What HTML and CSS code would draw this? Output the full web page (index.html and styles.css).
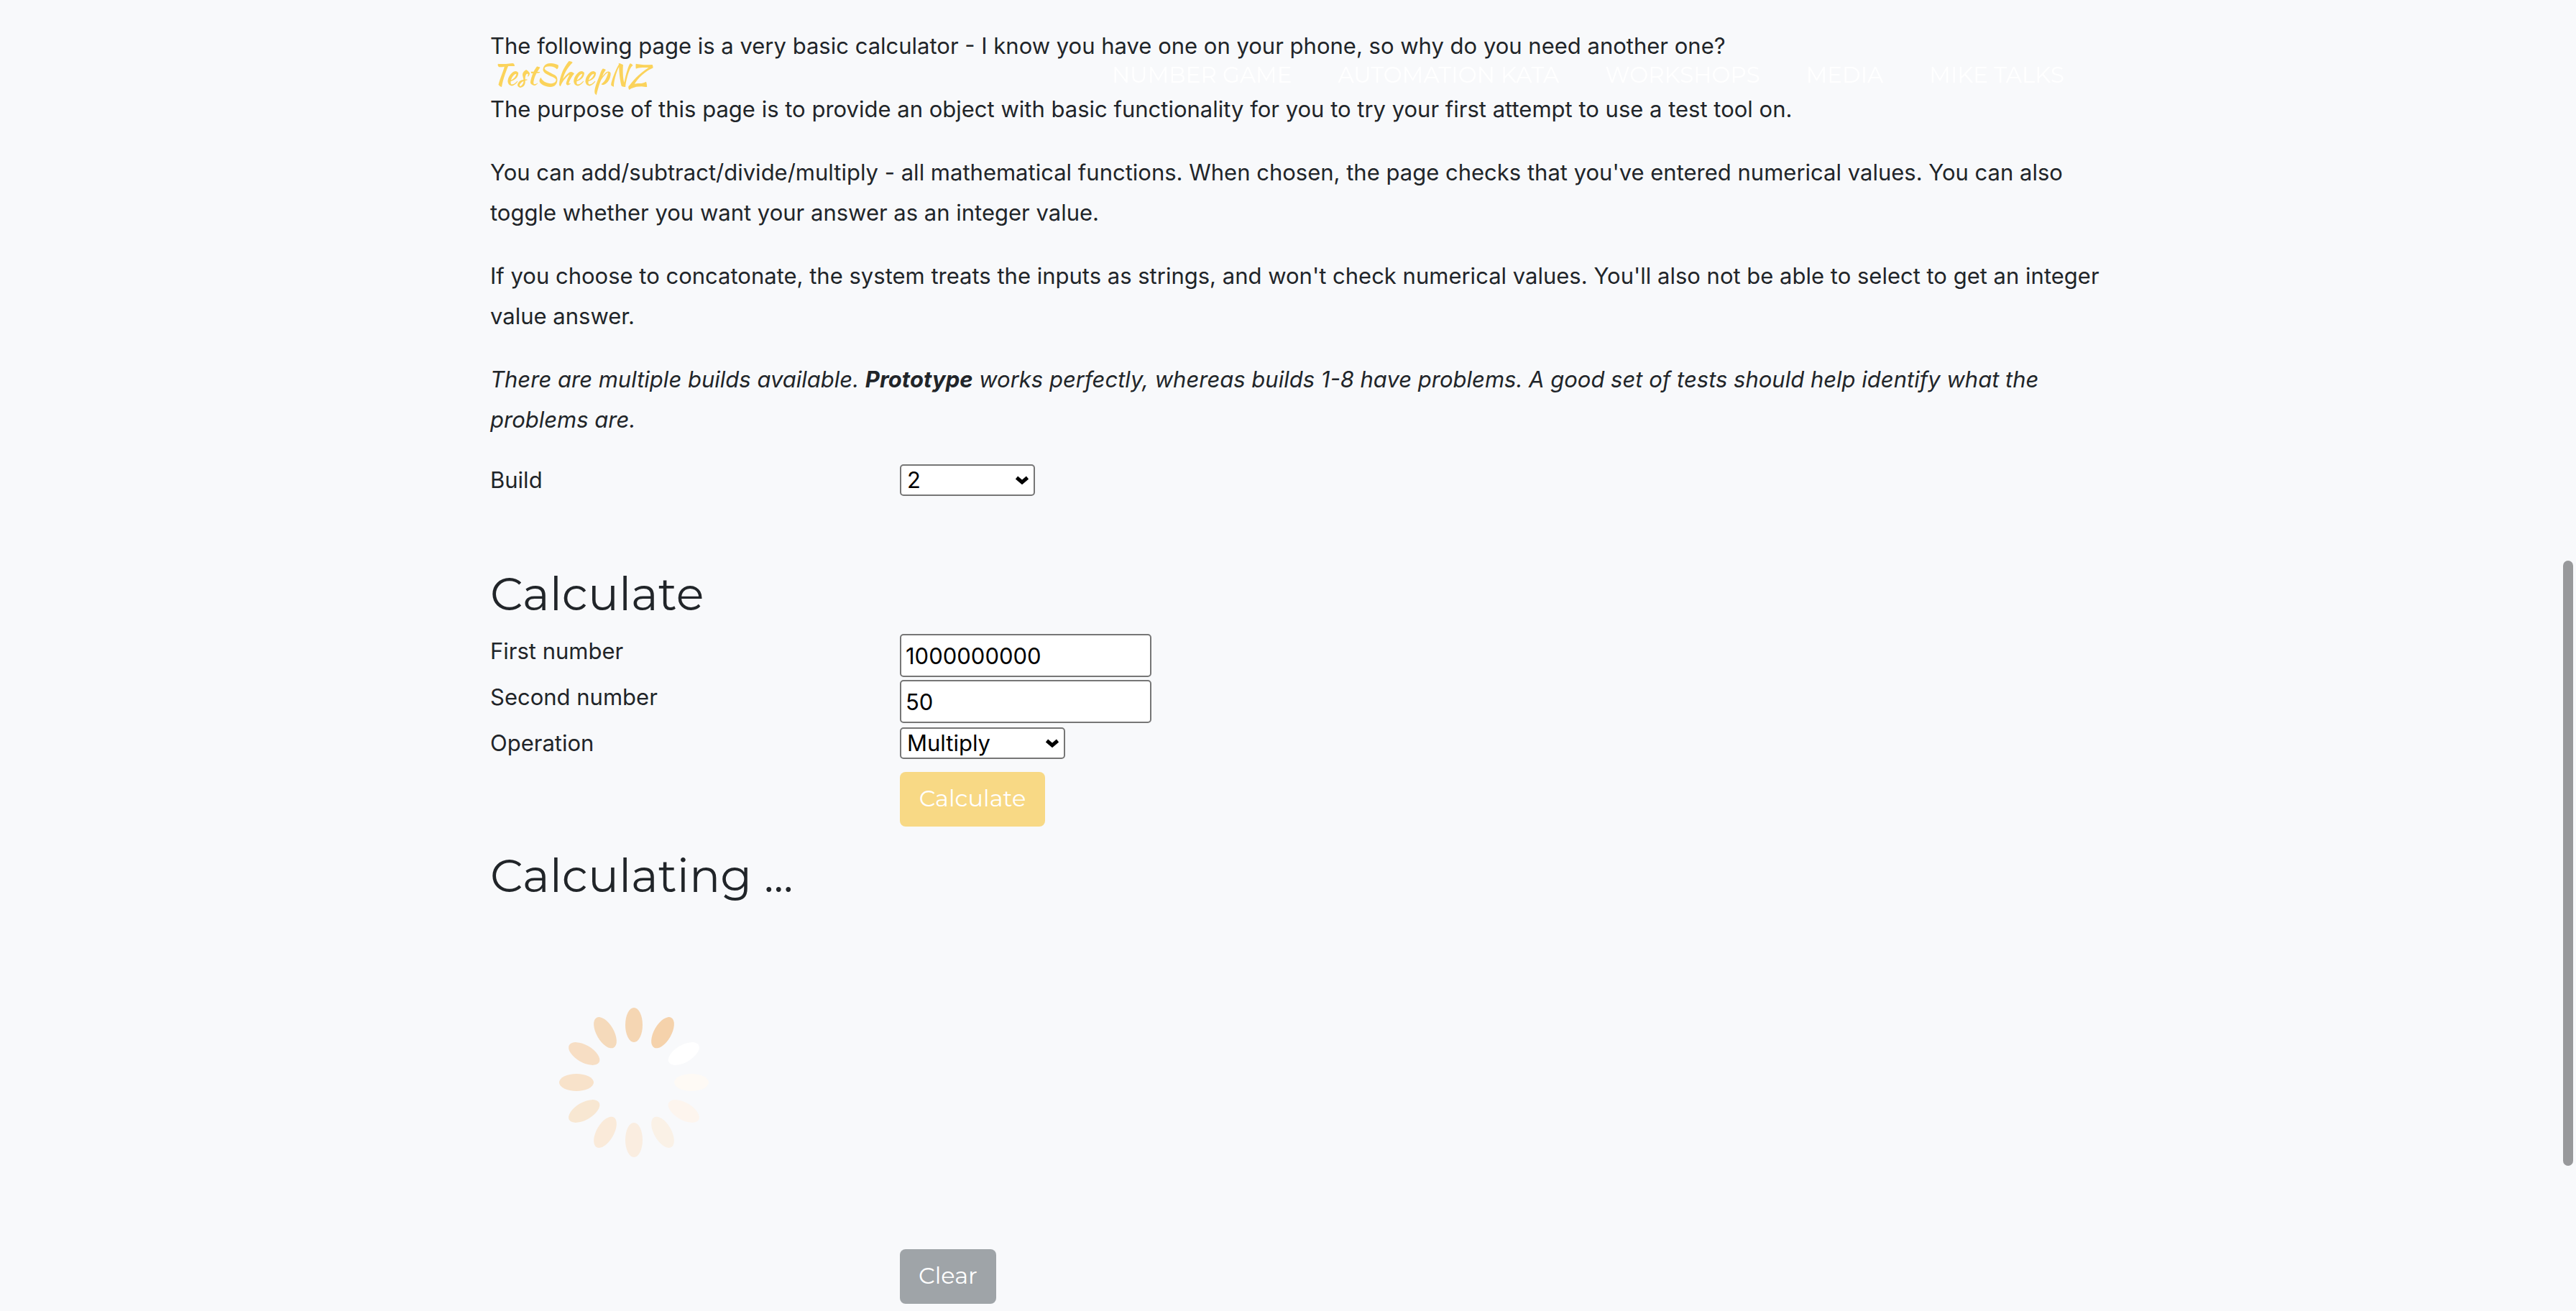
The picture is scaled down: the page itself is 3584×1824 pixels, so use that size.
FILE: index.html
```html
<!DOCTYPE html>
<html lang="en">
<head>
<meta charset="utf-8">
<title>Basic Calculator - TestSheepNZ</title>
<link rel="stylesheet" href="styles.css">
</head>
<body>
<nav class="navbar">
  <div class="container navbar-inner">
    <a class="brand" href="#top">TestSheepNZ</a>
    <ul class="nav-list">
      <li><a class="nav-link" href="#game">NUMBER GAME</a></li>
      <li><a class="nav-link" href="#kata">AUTOMATION KATA</a></li>
      <li><a class="nav-link" href="#workshops">WORKSHOPS</a></li>
      <li><a class="nav-link" href="#media">MEDIA</a></li>
      <li><a class="nav-link" href="#talks">MIKE TALKS</a></li>
    </ul>
  </div>
</nav>
<main class="container page" id="top">
  <section class="intro">
    <p>The following page is a very basic calculator - I know you have one on your phone, so why do you need another one?</p>
    <p>The purpose of this page is to provide an object with basic functionality for you to try your first attempt to use a test tool on.</p>
    <p>You can add/subtract/divide/multiply - all mathematical functions. When chosen, the page checks that you've entered numerical values. You can also toggle whether you want your answer as an integer value.</p>
    <p>If you choose to concatonate, the system treats the inputs as strings, and won't check numerical values. You'll also not be able to select to get an integer value answer.</p>
    <p><em>There are multiple builds available. <strong>Prototype</strong> works perfectly, whereas builds 1-8 have problems. A good set of tests should help identify what the problems are.</em></p>
  </section>
  <form class="calculator">
    <div class="row build-row">
      <label for="build">Build</label>
      <div class="select select-build">
        <select id="build"><option>Prototype</option><option>1</option><option selected>2</option><option>3</option></select>
        <svg class="chevron" viewBox="0 0 20 12" aria-hidden="true"><path d="M2.500 2.500L10 9L17.500 2.500"/></svg>
      </div>
    </div>
    <h2>Calculate</h2>
    <div class="row">
      <label for="number1">First number</label>
      <input id="number1" type="text" value="1000000000">
    </div>
    <div class="row">
      <label for="number2">Second number</label>
      <input id="number2" type="text" value="50">
    </div>
    <div class="row">
      <label for="operation">Operation</label>
      <div class="select select-operation">
        <select id="operation"><option>Add</option><option>Subtract</option><option selected>Multiply</option><option>Divide</option><option>Concatenate</option></select>
        <svg class="chevron" viewBox="0 0 20 12" aria-hidden="true"><path d="M2.500 2.500L10 9L17.500 2.500"/></svg>
      </div>
    </div>
    <div class="row actions">
      <button class="btn btn-primary" type="button" disabled>Calculate</button>
    </div>
    <h2>Calculating ...</h2>
    <svg class="spinner" viewBox="-200 -200 400 400" role="img" aria-label="Calculating">
      <ellipse cy="-80" rx="12" ry="24" fill="#f5d6b3"/>
      <ellipse cy="-80" rx="12" ry="24" fill="#f5d2ab" transform="rotate(30)"/>
      <ellipse cy="-80" rx="12" ry="24" fill="#ffffff" transform="rotate(60)"/>
      <ellipse cy="-80" rx="12" ry="24" fill="#fefaf5" transform="rotate(90)"/>
      <ellipse cy="-80" rx="12" ry="24" fill="#fdf5ee" transform="rotate(120)"/>
      <ellipse cy="-80" rx="12" ry="24" fill="#faf1e6" transform="rotate(150)"/>
      <ellipse cy="-80" rx="12" ry="24" fill="#faede0" transform="rotate(180)"/>
      <ellipse cy="-80" rx="12" ry="24" fill="#faead9" transform="rotate(210)"/>
      <ellipse cy="-80" rx="12" ry="24" fill="#f8e7d2" transform="rotate(240)"/>
      <ellipse cy="-80" rx="12" ry="24" fill="#f8e2ca" transform="rotate(270)"/>
      <ellipse cy="-80" rx="12" ry="24" fill="#f7dec4" transform="rotate(300)"/>
      <ellipse cy="-80" rx="12" ry="24" fill="#f5dabb" transform="rotate(330)"/>
    </svg>
    <div class="row">
      <button class="btn btn-secondary" type="reset" disabled>Clear</button>
    </div>
  </form>
</main>
<div class="scroll-thumb"></div>
</body>
</html>
```
FILE: styles.css
```css
* { box-sizing: border-box; }

body {
  margin: 0;
  background: #f8f9fb;
  color: #212529;
  font-family: Inter, "Liberation Sans", sans-serif;
  font-size: 31px;
  line-height: 48px;
}

.container {
  width: 100%;
  max-width: 2280px;
  margin: 0 auto;
  padding: 0 30px;
}

.page {
  padding-top: 36px;
  padding-bottom: 8px;
}

.navbar {
  position: fixed;
  top: 0;
  left: 0;
  right: 0;
  padding: 76px 0;
}

.navbar-inner {
  display: flex;
  align-items: center;
  justify-content: space-between;
}

.brand {
  padding-left: 2px;
  color: #fbd35b;
  font-family: "Kaushan Script", Lato, cursive;
  font-size: 40px;
  line-height: 56px;
  text-decoration: none;
}

.nav-list {
  display: flex;
  gap: 64px;
  margin: 0;
  padding: 0 30px 0 0;
  list-style: none;
}

.nav-link {
  color: #ffffff;
  font-family: Montserrat, Inter, sans-serif;
  font-size: 31px;
  text-decoration: none;
}

.intro { margin-right: -30px; }

p {
  margin: 0 0 32px;
  line-height: 56px;
}

.row {
  display: grid;
  grid-template-columns: 1fr 3fr;
  align-items: start;
  width: calc(100% + 60px);
  min-height: 64px;
}

.build-row { margin-bottom: 82px; }

.row input {
  width: 350px;
  height: 60px;
  padding: 2px 6px;
  border: 2px solid #767676;
  border-radius: 5px;
  background: #ffffff;
  color: #000000;
  font: inherit;
}

.select {
  position: relative;
  margin-top: 2px;
}

.select-build { width: 188px; }
.select-operation { width: 230px; }

.select select {
  display: block;
  width: 100%;
  height: 44px;
  padding: 0 40px 0 8px;
  border: 2px solid #767676;
  border-radius: 5px;
  background: #ffffff;
  color: #000000;
  font: inherit;
  line-height: 40px;
  appearance: none;
}

.chevron {
  position: absolute;
  top: 16px;
  right: 8px;
  width: 20px;
  height: 12px;
  fill: none;
  stroke: #000000;
  stroke-width: 5;
  pointer-events: none;
}

h2 {
  margin: 0 0 20px;
  font-family: Montserrat, Inter, sans-serif;
  font-size: 64px;
  font-weight: 400;
  line-height: 72px;
}

.actions { margin-bottom: 32px; }

.btn {
  grid-column: 2;
  justify-self: start;
  height: 76px;
  padding: 0 24px 4px;
  border: 0;
  border-radius: 8px;
  color: #ffffff;
  font-family: Montserrat, Inter, sans-serif;
  font-size: 32px;
}

.btn-primary { width: 202px; background: #f8d985; }
.btn-secondary { width: 134px; background: #9fa4a8; }

.spinner {
  display: block;
  width: 400px;
  height: 400px;
  margin: 52px 0 32px;
}

.scroll-thumb {
  position: fixed;
  top: 780px;
  right: 4px;
  width: 14px;
  height: 842px;
  border-radius: 7px;
  background: #98999b;
}
```
